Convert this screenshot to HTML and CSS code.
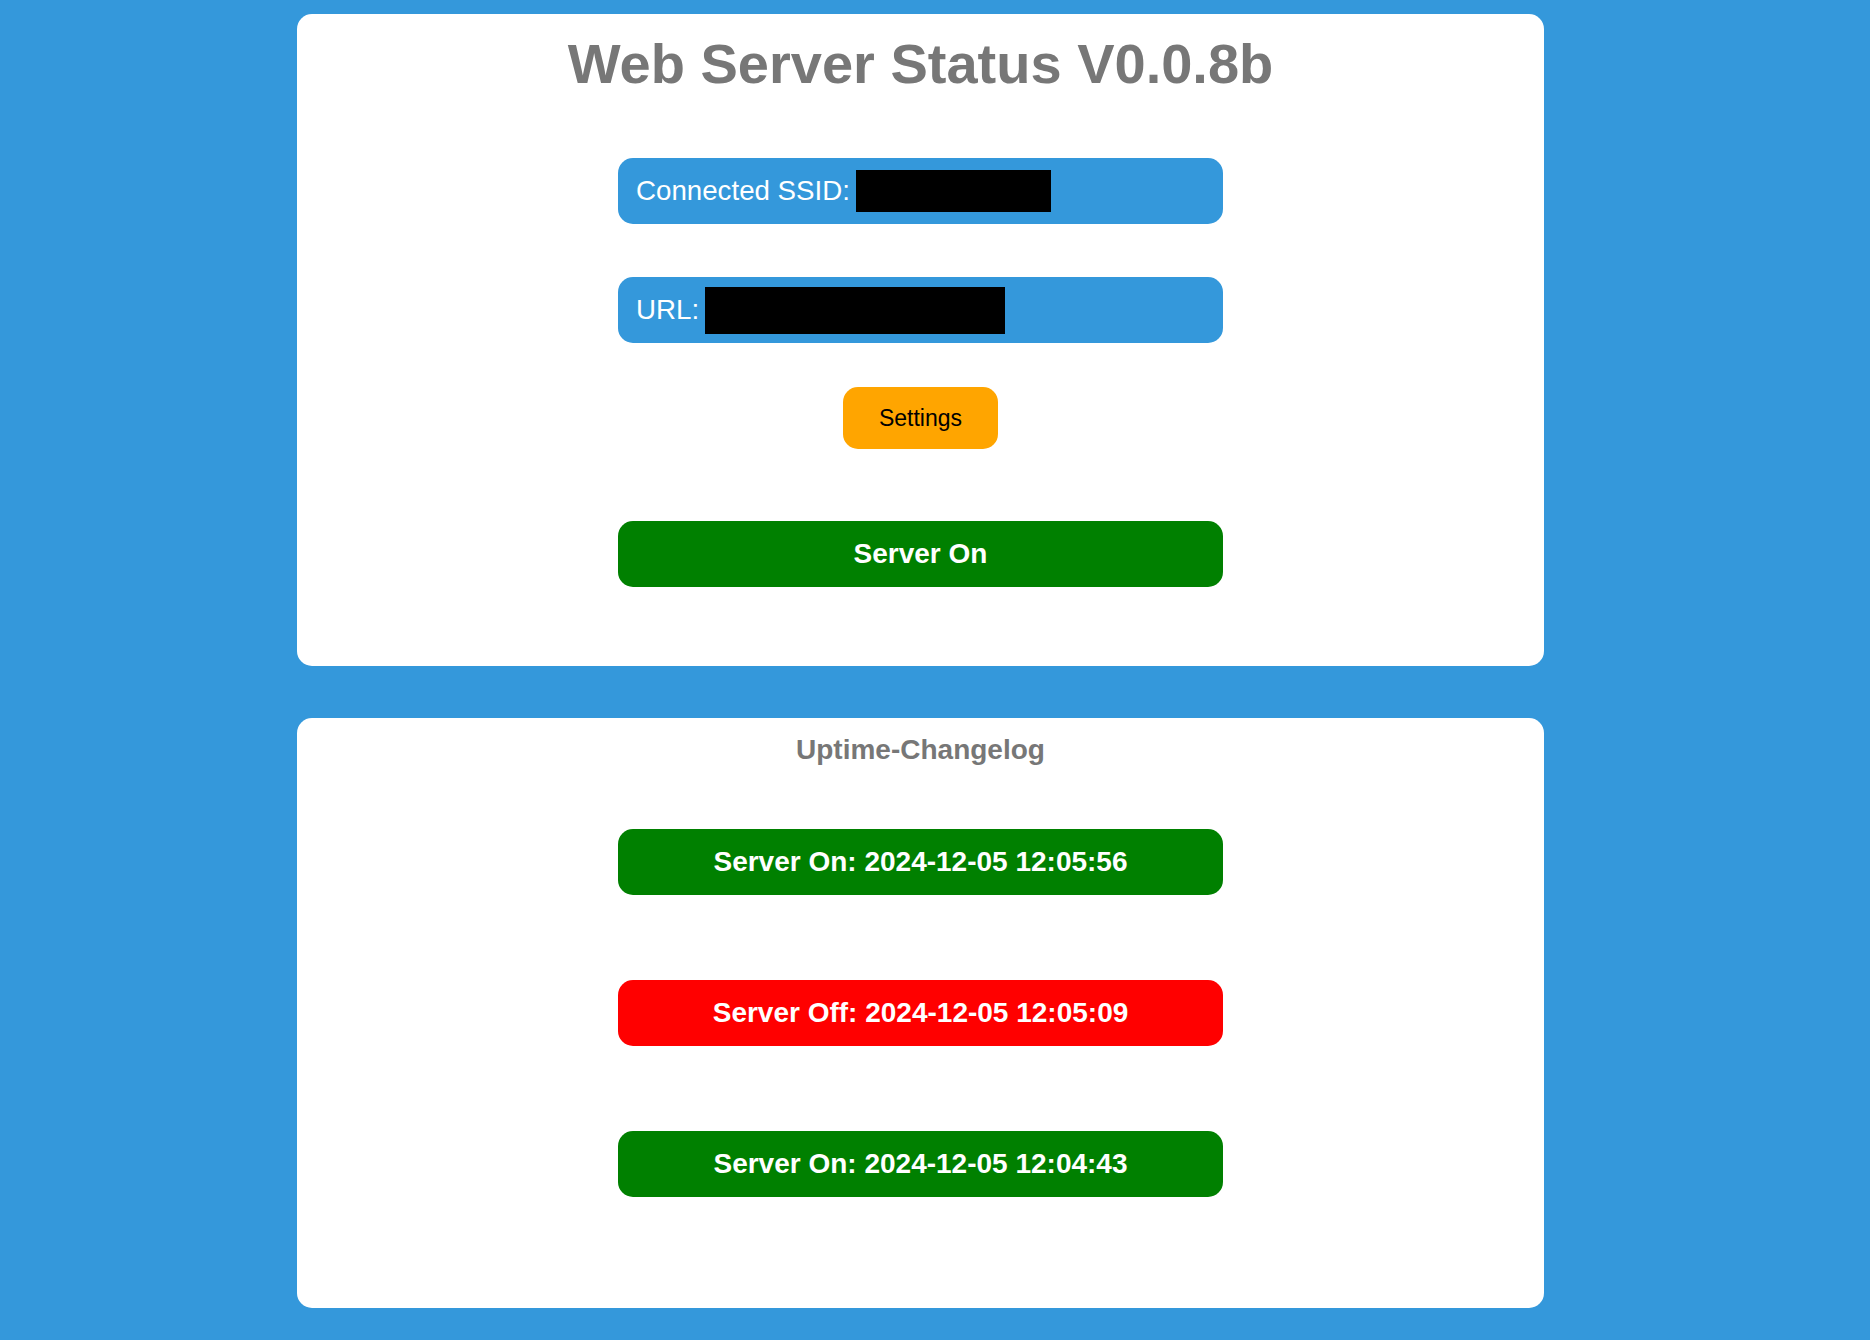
FILE: index.html
```html
<!DOCTYPE html>
<html lang="en">
<head>
<meta charset="utf-8">
<title>Web Server Status</title>
<link rel="stylesheet" href="styles.css">
</head>
<body>
<div class="page">
  <section class="card card-status">
    <h1 class="title">Web Server Status V0.0.8b</h1>
    <div class="info info-ssid"><span class="label">Connected SSID:</span><span class="redact redact-ssid"></span></div>
    <div class="info info-url"><span class="label">URL:</span><span class="redact redact-url"></span></div>
    <button class="settings">Settings</button>
    <div class="state state-on state-main">Server On</div>
  </section>
  <section class="card card-log">
    <h2 class="log-title">Uptime-Changelog</h2>
    <div class="state state-on log-entry">Server On: 2024-12-05 12:05:56</div>
    <div class="state state-off log-entry">Server Off: 2024-12-05 12:05:09</div>
    <div class="state state-on log-entry">Server On: 2024-12-05 12:04:43</div>
  </section>
</div>
</body>
</html>
```

FILE: styles.css
```css
html, body {
  margin: 0;
  padding: 0;
}

body {
  background: #3498db;
  font-family: "Liberation Sans", Arial, sans-serif;
  min-height: 1340px;
}

.page {
  width: 1247px;
  margin-left: 297px;
  padding: 14px 0 32px;
  display: flex;
  flex-direction: column;
  gap: 52px;
}

.card {
  background: #ffffff;
  border-radius: 15px;
  display: flex;
  flex-direction: column;
  align-items: center;
}

.card-status {
  padding: 18px 0 79px;
}

.card-log {
  padding: 16px 0 111px;
}

.title {
  margin: 0;
  font-size: 56px;
  line-height: 64px;
  font-weight: bold;
  color: #777777;
}

.log-title {
  margin: 0;
  font-size: 28px;
  line-height: 32px;
  font-weight: bold;
  color: #777777;
}

.info {
  box-sizing: border-box;
  width: 605px;
  height: 66px;
  padding: 0 18px;
  background: #3498db;
  color: #ffffff;
  border-radius: 15px;
  display: flex;
  align-items: center;
  font-size: 27.7px;
  line-height: 32px;
}

.info-ssid {
  margin-top: 62px;
}

.info-url {
  margin-top: 53px;
}

.redact {
  background: #000000;
  margin-left: 6px;
}

.redact-ssid {
  width: 195px;
  height: 42px;
}

.redact-url {
  width: 300px;
  height: 47px;
}

.settings {
  margin-top: 44px;
  box-sizing: border-box;
  width: 155px;
  height: 62px;
  padding: 0;
  border: none;
  border-radius: 15px;
  background: #ffa500;
  color: #000000;
  font-family: "Liberation Sans", Arial, sans-serif;
  font-size: 23px;
  line-height: 26px;
}

.state {
  box-sizing: border-box;
  width: 605px;
  height: 66px;
  border-radius: 15px;
  color: #ffffff;
  font-size: 28px;
  line-height: 32px;
  font-weight: bold;
  display: flex;
  align-items: center;
  justify-content: center;
}

.state-on {
  background: #008000;
}

.state-off {
  background: #ff0000;
}

.state-main {
  margin-top: 72px;
}

.log-entry {
  margin-top: 85px;
}

.log-title + .log-entry {
  margin-top: 63px;
}
```
